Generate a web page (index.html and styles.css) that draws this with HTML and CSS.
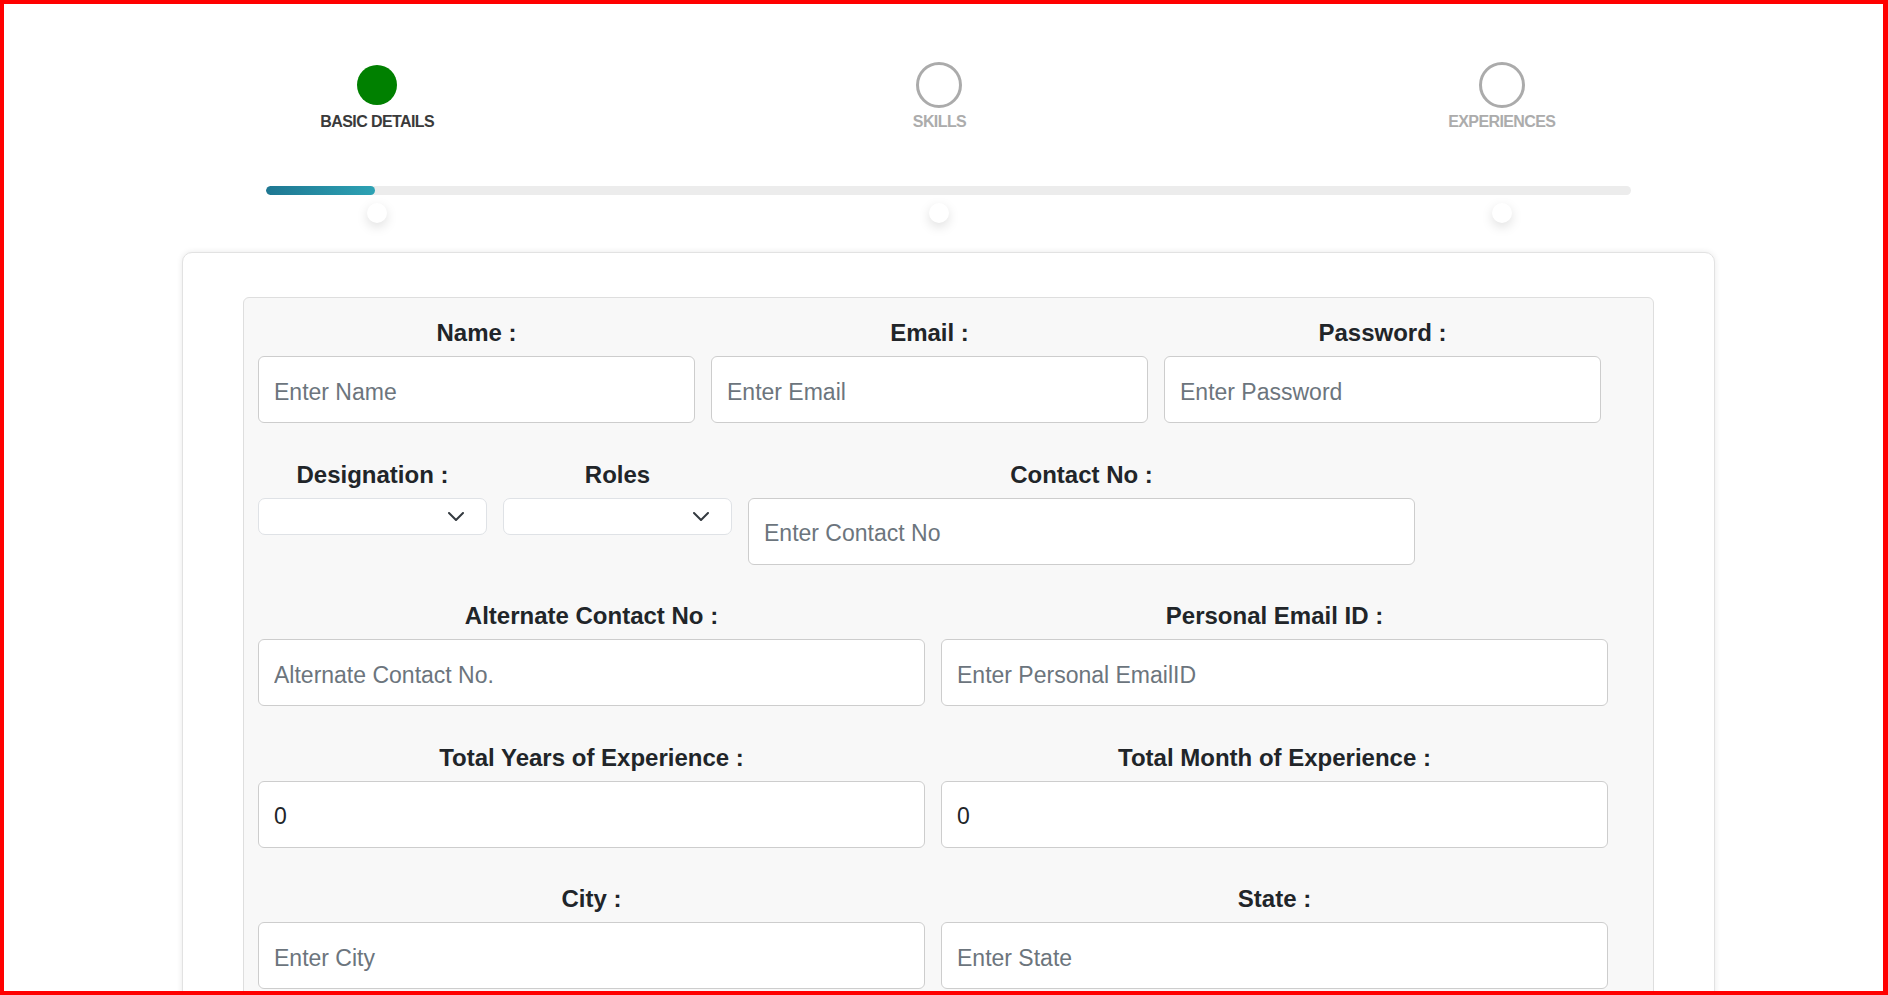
FILE: index.html
```html
<!DOCTYPE html>
<html lang="en">
<head>
<meta charset="utf-8">
<title>Registration - Basic Details</title>
<link rel="stylesheet" href="styles.css">
</head>
<body>
<div class="frame"></div>

<header class="stepper">
  <div class="steps">
    <div class="step step-active">
      <div class="circle-holder"><span class="circle circle-done"></span></div>
      <span class="step-label">BASIC DETAILS</span>
    </div>
    <div class="step">
      <div class="circle-holder"><span class="circle"></span></div>
      <span class="step-label">SKILLS</span>
    </div>
    <div class="step">
      <div class="circle-holder"><span class="circle"></span></div>
      <span class="step-label">EXPERIENCES</span>
    </div>
  </div>
  <div class="track"><div class="fill" style="width: 109px"></div></div>
  <div class="thumbs">
    <div class="thumb-cell"><span class="thumb"></span></div>
    <div class="thumb-cell"><span class="thumb"></span></div>
    <div class="thumb-cell"><span class="thumb"></span></div>
  </div>
</header>

<main class="card">
  <form class="panel">
    <div class="row row-3">
      <div class="field">
        <label class="label">Name :</label>
        <input class="input" type="text" placeholder="Enter Name">
      </div>
      <div class="field">
        <label class="label">Email :</label>
        <input class="input" type="text" placeholder="Enter Email">
      </div>
      <div class="field">
        <label class="label">Password :</label>
        <input class="input" type="password" placeholder="Enter Password">
      </div>
    </div>

    <div class="row row-mixed">
      <div class="field">
        <label class="label">Designation :</label>
        <div class="select">
          <svg class="chev" width="16" height="9" viewBox="0 0 16 9"><path d="M1 1 L8 8 L15 1" fill="none" stroke="#343a40" stroke-width="2" stroke-linecap="round" stroke-linejoin="round"/></svg>
        </div>
      </div>
      <div class="field">
        <label class="label">Roles</label>
        <div class="select">
          <svg class="chev" width="16" height="9" viewBox="0 0 16 9"><path d="M1 1 L8 8 L15 1" fill="none" stroke="#343a40" stroke-width="2" stroke-linecap="round" stroke-linejoin="round"/></svg>
        </div>
      </div>
      <div class="field">
        <label class="label">Contact No :</label>
        <input class="input" type="text" placeholder="Enter Contact No">
      </div>
    </div>

    <div class="row row-2">
      <div class="field">
        <label class="label">Alternate Contact No :</label>
        <input class="input" type="text" placeholder="Alternate Contact No.">
      </div>
      <div class="field">
        <label class="label">Personal Email ID :</label>
        <input class="input" type="text" placeholder="Enter Personal EmailID">
      </div>
    </div>

    <div class="row row-2">
      <div class="field">
        <label class="label">Total Years of Experience :</label>
        <input class="input" type="text" value="0">
      </div>
      <div class="field">
        <label class="label">Total Month of Experience :</label>
        <input class="input" type="text" value="0">
      </div>
    </div>

    <div class="row row-2">
      <div class="field">
        <label class="label">City :</label>
        <input class="input" type="text" placeholder="Enter City">
      </div>
      <div class="field">
        <label class="label">State :</label>
        <input class="input" type="text" placeholder="Enter State">
      </div>
    </div>
  </form>
</main>
</body>
</html>
```

FILE: styles.css
```css
html {
  overflow: hidden;
}

body {
  margin: 0;
  background: #ffffff;
  font-family: "Liberation Sans", Arial, sans-serif;
  color: #212529;
}

.frame {
  position: fixed;
  inset: 0;
  border: 4px solid #ff0000;
  border-right-width: 5px;
  pointer-events: none;
  z-index: 10;
}

/* ---------- stepper ---------- */
.stepper {
  padding-top: 62px;
}

.steps,
.thumbs {
  display: flex;
  margin-left: 96px;
  width: 1687px;
}

.step,
.thumb-cell {
  flex: 1;
  display: flex;
  flex-direction: column;
  align-items: center;
}

.circle-holder {
  height: 46px;
  display: flex;
  align-items: center;
  justify-content: center;
}

.circle {
  display: block;
  width: 46px;
  height: 46px;
  box-sizing: border-box;
  border: 3px solid #ababab;
  border-radius: 50%;
}

.circle-done {
  width: 40px;
  height: 40px;
  border: none;
  background: #008000;
}

.step-label {
  margin-top: 4px;
  font-size: 16px;
  line-height: 19px;
  font-weight: 700;
  letter-spacing: -0.6px;
  color: #acacac;
}

.step-active .step-label {
  color: #3a3a3a;
}

.track {
  margin-top: 55px;
  margin-left: 266px;
  width: 1365px;
  height: 9px;
  border-radius: 5px;
  background: #ececec;
  overflow: hidden;
}

.fill {
  height: 100%;
  border-radius: 5px;
  background: linear-gradient(90deg, #1e7792, #2da2b4);
}

.thumbs {
  margin-top: 8px;
}

.thumb {
  display: block;
  width: 20px;
  height: 20px;
  border-radius: 50%;
  background: #ffffff;
  box-shadow: 0 4px 12px rgba(0, 0, 0, 0.13);
}

/* ---------- card ---------- */
.card {
  margin-top: 29px;
  margin-left: 182px;
  width: 1533px;
  box-sizing: border-box;
  padding: 44px 60px 60px;
  border: 1px solid #e2e2e2;
  border-radius: 10px;
  box-shadow: 0 0 6px rgba(0, 0, 0, 0.09);
  background: #ffffff;
}

.panel {
  display: block;
  padding: 16px 14px 40px;
  border: 1px solid #dedede;
  border-radius: 6px;
  background: #f8f8f8;
}

.row {
  display: grid;
  column-gap: 16px;
  align-items: start;
  margin-bottom: 32.5px;
}

.row-3 {
  grid-template-columns: 437px 437px 437px;
}

.row-mixed {
  grid-template-columns: 229px 229px 667px;
}

.row-2 {
  grid-template-columns: 667px 667px;
}

.field {
  display: flex;
  flex-direction: column;
}

.label {
  display: block;
  text-align: center;
  font-size: 24px;
  line-height: 36px;
  padding-top: 1px;
  font-weight: 700;
  color: #212529;
  margin-bottom: 5px;
}

.input {
  display: block;
  width: 100%;
  height: 67px;
  box-sizing: border-box;
  padding: 5px 15px 0;
  border: 1px solid #cdcdcd;
  border-radius: 6px;
  background: #ffffff;
  font-family: "Liberation Sans", Arial, sans-serif;
  font-size: 23px;
  color: #212529;
  outline: none;
}

.input::placeholder {
  color: #6c757d;
  opacity: 1;
}

.select {
  height: 37px;
  box-sizing: border-box;
  border: 1px solid #dfe2e6;
  border-radius: 7px;
  background: #ffffff;
  display: flex;
  align-items: center;
  justify-content: flex-end;
  padding-right: 22px;
}

.chev {
  display: block;
}
```
